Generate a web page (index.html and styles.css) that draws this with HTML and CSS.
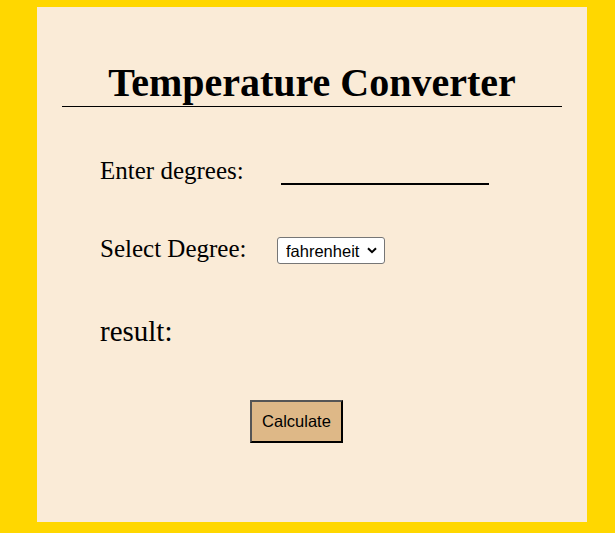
FILE: index.html
```html
<!DOCTYPE html>
<html lang="en">
<head>
<meta charset="utf-8">
<title>Temperature Converter</title>
<link rel="stylesheet" href="styles.css">
</head>
<body>
  <main class="card">
    <h1 class="title">Temperature Converter</h1>
    <div class="row row-input">
      <label class="label label-degrees" for="deg">Enter degrees:</label>
      <input class="degrees" id="deg" type="text">
    </div>
    <div class="row row-select">
      <label class="label label-select" for="unit">Select Degree:</label>
      <span class="select-wrap">
        <select class="unit" id="unit">
          <option>fahrenheit</option>
          <option>celsius</option>
        </select>
        <svg class="chevron" width="10" height="7" viewBox="0 0 10 7" aria-hidden="true">
          <path d="M1 1.2 L5 5.2 L9 1.2" fill="none" stroke="#000" stroke-width="2"/>
        </svg>
      </span>
    </div>
    <p class="result">result:</p>
    <div class="actions">
      <button class="calc" type="button">Calculate</button>
    </div>
  </main>
</body>
</html>
```

FILE: styles.css
```css
html, body {
  margin: 0;
  padding: 0;
}

body {
  background: #ffd700;
  padding: 7px 0 0 37px;
  height: 533px;
  box-sizing: border-box;
  font-family: "Liberation Serif", "Times New Roman", serif;
  color: #000;
}

.card {
  width: 550px;
  height: 515px;
  background: #faebd7;
  box-sizing: border-box;
  padding: 53px 0 0 0;
}

.title {
  width: 500px;
  margin: 0 auto;
  font-size: 40px;
  line-height: 46px;
  font-weight: bold;
  text-align: center;
  border-bottom: 1px solid #000;
}

.row {
  display: flex;
  padding-left: 63px;
}

.row-input {
  margin-top: 49px;
  align-items: flex-end;
}

.row-select {
  margin-top: 49px;
  align-items: flex-start;
}

.label {
  font-size: 25px;
  line-height: 29px;
}

.label-degrees {
  width: 181px;
}

.label-select {
  width: 177px;
}

.degrees {
  width: 208px;
  height: 24px;
  box-sizing: border-box;
  border: none;
  border-bottom: 2px solid #000;
  background: transparent;
  outline: none;
  padding: 0;
  margin: 0;
}

.select-wrap {
  position: relative;
  display: block;
  margin-top: 3px;
}

.unit {
  display: block;
  appearance: none;
  -webkit-appearance: none;
  width: 108px;
  height: 27px;
  box-sizing: border-box;
  margin: 0;
  padding: 0 0 0 8px;
  border: 1px solid #767676;
  border-radius: 3px;
  font-family: "Liberation Sans", Arial, sans-serif;
  font-size: 16.5px;
  color: #000;
  background: #fff;
}

.chevron {
  position: absolute;
  left: 90px;
  top: 10px;
  pointer-events: none;
}

.result {
  margin: 51px 0 0 0;
  padding-left: 63px;
  font-size: 29px;
  line-height: 33px;
}

.actions {
  margin-top: 52px;
  padding-left: 213px;
}

.calc {
  width: 93px;
  height: 43px;
  padding: 0;
  background: #deb887;
  border: 2px solid;
  border-color: #555 #000 #000 #555;
  font-family: "Liberation Sans", Arial, sans-serif;
  font-size: 16.5px;
  color: #000;
}
```
